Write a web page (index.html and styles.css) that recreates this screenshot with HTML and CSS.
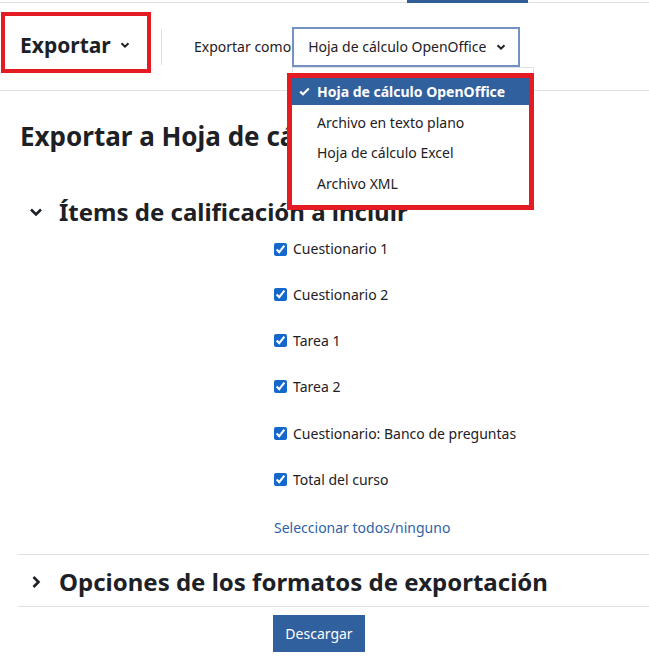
FILE: index.html
```html
<!DOCTYPE html>
<html lang="es">
<head>
<meta charset="utf-8">
<title>Exportar</title>
<link rel="stylesheet" href="styles.css">
</head>
<body>
<div class="tabstrip"><span class="tab-active"></span></div>

<header class="tertiary">
  <div class="nav-title">
    <span>Exportar</span>
    <svg class="chev" width="10" height="8" viewBox="0 0 10 8"><path d="M1.5 2.2 5 5.6 8.5 2.2" fill="none" stroke="#1d2125" stroke-width="2"/></svg>
  </div>
  <div class="vsep"></div>
  <div class="format">
    <span class="format-label">Exportar como</span>
    <div class="select">
      <span>Hoja de cálculo OpenOffice</span>
      <svg class="chev" width="10" height="8" viewBox="0 0 10 8"><path d="M1.5 2.2 5 5.6 8.5 2.2" fill="none" stroke="#1d2125" stroke-width="2"/></svg>
    </div>
  </div>
  <div class="menu-frame"></div>
  <ul class="menu">
    <li class="menu-item active">
      <svg class="tick" width="11" height="9" viewBox="0 0 11 9"><path d="M1.2 4.6 4 7.3 9.8 1.5" fill="none" stroke="#fff" stroke-width="2.2"/></svg>
      Hoja de cálculo OpenOffice
    </li>
    <li class="menu-item">Archivo en texto plano</li>
    <li class="menu-item">Hoja de cálculo Excel</li>
    <li class="menu-item">Archivo XML</li>
  </ul>
</header>

<main class="content">
  <h2 class="page-title">Exportar a Hoja de cálculo OpenOffice</h2>

  <section class="fieldset">
    <h3 class="legend">
      <svg class="legend-icon" width="14" height="10" viewBox="0 0 14 10"><path d="M2 2.5 7 7.5 12 2.5" fill="none" stroke="#1d2125" stroke-width="2.6"/></svg>
      Ítems de calificación a incluir
    </h3>
    <div class="items">
      <label class="check"><input type="checkbox" checked> Cuestionario 1</label>
      <label class="check"><input type="checkbox" checked> Cuestionario 2</label>
      <label class="check"><input type="checkbox" checked> Tarea 1</label>
      <label class="check"><input type="checkbox" checked> Tarea 2</label>
      <label class="check"><input type="checkbox" checked> Cuestionario: Banco de preguntas</label>
      <label class="check"><input type="checkbox" checked> Total del curso</label>
      <a class="toggle-all" href="#">Seleccionar todos/ninguno</a>
    </div>
  </section>

  <section class="fieldset collapsed">
    <h3 class="legend">
      <svg class="legend-icon" width="14" height="14" viewBox="0 0 14 14"><path d="M4.5 2 9.5 7 4.5 12" fill="none" stroke="#1d2125" stroke-width="2.6"/></svg>
      Opciones de los formatos de exportación
    </h3>
  </section>

  <div class="actions">
    <button class="btn-primary" type="button">Descargar</button>
  </div>
</main>
</body>
</html>
```

FILE: styles.css
```css
* { box-sizing: border-box; }

body {
  margin: 0;
  font-family: "Noto Sans", "Open Sans", sans-serif;
  color: #1d2125;
  background: #fff;
  font-size: 14px;
}

/* secondary navigation strip */
.tabstrip {
  height: 3px;
  border-bottom: 1px solid #dee2e6;
  position: relative;
}
.tab-active {
  position: absolute;
  left: 407px;
  top: 0;
  width: 121px;
  height: 3px;
  background: #2f5d98;
}

/* tertiary navigation */
.tertiary {
  position: relative;
  display: flex;
  align-items: center;
  height: 88px;
  border-bottom: 1px solid #dee2e6;
  padding-left: 1px;
}
.nav-title {
  display: flex;
  align-items: center;
  gap: 9px;
  width: 150px;
  height: 61px;
  align-self: flex-start;
  margin-top: 9px;
  padding-left: 15px;
  padding-top: 5px;
  border: 4px solid #e51b23;
  font-weight: 700;
  font-size: 21px;
}
.vsep {
  width: 1px;
  height: 36px;
  background: #dee2e6;
  margin-left: 10px;
  margin-right: 32px;
}
.format {
  display: flex;
  align-items: center;
}
.format-label { font-size: 14px; }
.select {
  display: flex;
  align-items: center;
  gap: 10px;
  height: 40px;
  width: 228px;
  margin-left: 1px;
  padding-left: 14px;
  border: 2px solid #7391c1;
  font-size: 14px;
}

.menu-frame {
  position: absolute;
  left: 292px;
  top: 64px;
  width: 242px;
  height: 20px;
  border: 1px solid #dee2e6;
  border-bottom: 0;
  background: #fff;
}
.menu {
  position: absolute;
  left: 287px;
  top: 70px;
  width: 247px;
  height: 137px;
  margin: 0;
  padding: 0;
  list-style: none;
  border: 5px solid #e51b23;
  background: #fff;
  z-index: 2;
}
.menu-item {
  height: 30.5px;
  display: flex;
  align-items: center;
  padding-left: 25px;
  font-size: 14px;
}
.menu-item.active {
  height: 27px;
  background: #31609e;
  color: #fff;
  font-weight: 700;
  padding-left: 7px;
  gap: 7px;
  margin-bottom: 2px;
}

/* page body */
.content {
  padding: 0 0 0 18px;
}
.page-title {
  margin: 0;
  padding: 27px 0 0 2px;
  font-size: 26px;
  font-weight: 700;
  line-height: 36px;
}
.fieldset {
  border-bottom: 1px solid #dee2e6;
}
.legend {
  display: flex;
  align-items: center;
  gap: 16px;
  margin: 0;
  padding-left: 11px;
  font-size: 24px;
  font-weight: 700;
  line-height: 32px;
}
.fieldset:first-of-type .legend { margin-top: 42px; }
.items {
  display: flex;
  flex-direction: column;
  padding-left: 256px;
  padding-top: 11px;
  padding-bottom: 17px;
}
.check {
  display: flex;
  align-items: center;
  gap: 6px;
  height: 46.4px;
  font-size: 14px;
}
.check:first-child { height: 32px; align-items: flex-start; }
.check input {
  margin: 0;
  width: 13px;
  height: 13px;
  accent-color: #1468cc;
}
.check:first-child input { margin-top: 4px; }
.toggle-all {
  display: block;
  margin-top: 15px;
  color: #3063a6;
  text-decoration: none;
  font-size: 14px;
}
.collapsed .legend {
  padding-top: 11px;
  padding-bottom: 8px;
}
.actions {
  padding: 8px 0 0 255px;
}
.btn-primary {
  height: 37px;
  width: 92px;
  border: 0;
  background: #31609e;
  color: #fff;
  font-family: inherit;
  font-size: 14px;
  padding: 0;
}
```
